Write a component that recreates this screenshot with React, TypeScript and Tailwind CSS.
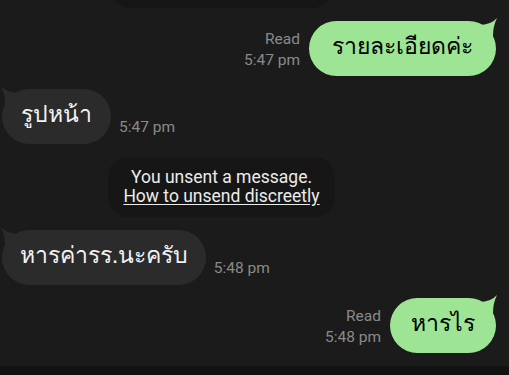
import React from "react";

const thai = { fontFamily: "FreeSans, 'DejaVu Sans', sans-serif" };
const roboto = { fontFamily: "Roboto, 'Liberation Sans', sans-serif" };

function TailRight() {
  return (
    <svg className="absolute -right-[1px] -top-[3px]" width="18" height="18" viewBox="0 0 18 18">
      <path d="M0 7 Q12 7 18 0 Q14 8 14 18 L0 18 Z" fill="#9de594" />
    </svg>
  );
}
function TailLeft() {
  return (
    <svg className="absolute -left-[1px] -top-[3px]" width="18" height="18" viewBox="0 0 18 18">
      <path d="M18 7 Q6 7 0 0 Q4 8 4 18 L18 18 Z" fill="#2b2b2b" />
    </svg>
  );
}

function Sent({ text, time, px }: { text: string; time: string; px: string }) {
  return (
    <div className="flex items-end justify-end pr-[13px]">
      <div className="flex flex-col items-end pb-[5px] mr-[9px] text-[15.5px] leading-[21px] text-[#8a8a8a]" style={roboto}>
        <span>Read</span>
        <span>{time}</span>
      </div>
      <div className="relative">
        <div className={`h-[55px] flex items-center rounded-[28px] bg-[#9de594] ${px} text-[23px] text-black whitespace-nowrap relative z-10`} style={thai}>
          {text}
        </div>
        <TailRight />
      </div>
    </div>
  );
}

function Recv({ text, time, px }: { text: string; time: string; px: string }) {
  return (
    <div className="flex items-end pl-[2px]">
      <div className="relative">
        <div className={`h-[55px] flex items-center rounded-[28px] bg-[#2b2b2b] ${px} text-[23px] text-[#f2f2f2] whitespace-nowrap relative z-10`} style={thai}>
          {text}
        </div>
        <TailLeft />
      </div>
      <span className="ml-[8px] pb-[6px] text-[15.5px] leading-[21px] text-[#8a8a8a]" style={roboto}>{time}</span>
    </div>
  );
}

export default function App() {
  return (
    <div className="w-[509px] h-[375px] overflow-hidden bg-[#1b1b1b] flex flex-col">
      <div className="flex flex-col gap-[13px] flex-1">
        <div className="ml-[110px] w-[222px] h-[60px] -mt-[52px] rounded-[20px] bg-[#161616]" />
        <Sent text="รายละเอียดค่ะ" time="5:47 pm" px="px-[23px]" />
        <Recv text="รูปหน้า" time="5:47 pm" px="px-[19px]" />
        <div className="ml-[108px] w-[227px] h-[60px] rounded-[20px] bg-[#161616] flex flex-col items-center justify-center text-[17.5px] leading-[19px] text-[#ececec]" style={roboto}>
          <span>You unsent a message.</span>
          <span className="underline underline-offset-[2px]">How to unsend discreetly</span>
        </div>
        <Recv text="หารค่ารร.นะครับ" time="5:48 pm" px="px-[18px]" />
        <Sent text="หารไร" time="5:48 pm" px="px-[21px]" />
      </div>
      <div className="h-[9px] bg-[#121212]" />
    </div>
  );
}
